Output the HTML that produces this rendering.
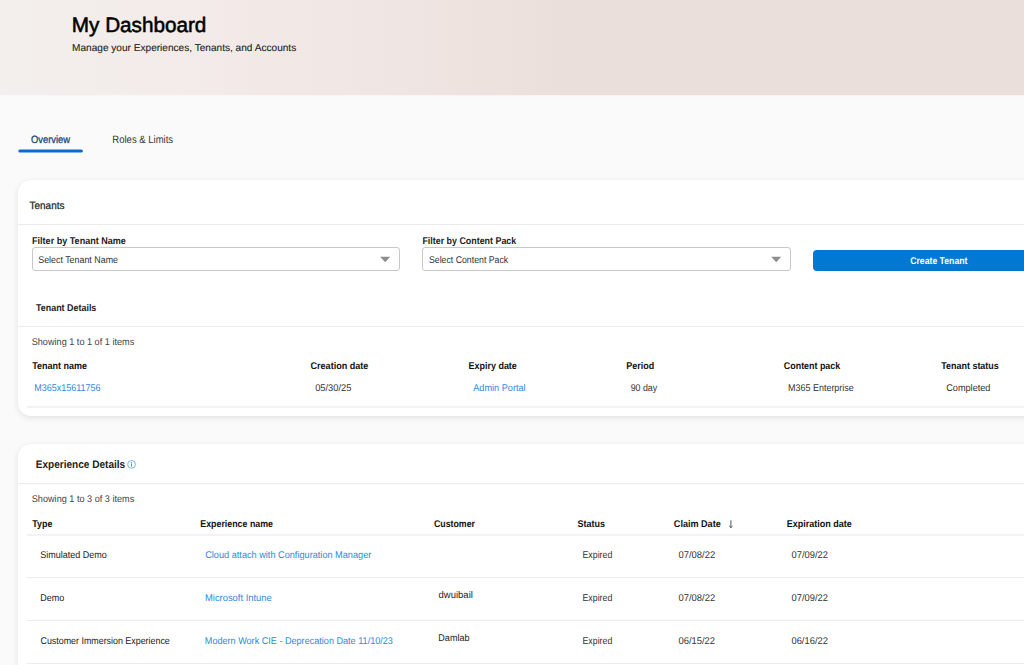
<!DOCTYPE html>
<html><head><meta charset="utf-8"><title>My Dashboard</title>
<style>
html,body{margin:0;padding:0}
body{width:1024px;height:665px;overflow:hidden;position:relative;background:#fafafa;font-family:"Liberation Sans",sans-serif}
.hdr{position:absolute;left:0;top:0;width:1024px;height:95px;background:linear-gradient(90deg,#f3efec 0%,#f3ebe9 20%,#f0e6e3 36%,#ebdfdb 56%,#ebdfdb 100%)}
.card{position:absolute;left:18px;width:1100px;background:#fff;border-radius:13px;box-shadow:0 2px 6px rgba(0,0,0,.095),0 0 2px rgba(0,0,0,.025)}
.c1{top:180px;height:236px}
.c2{top:444px;height:300px}
.dv{position:absolute;left:18px;width:1100px;height:1px;background:#eaecf0}
.ln{position:absolute;left:27px;width:1100px;height:1px;background:#ebedf1}
.ln2{position:absolute;left:27px;width:1100px;height:2px;background:#f2f3f6}
.sel{position:absolute;top:247px;height:22px;border:1px solid #c8c8c8;border-radius:3px;background:#fff;box-sizing:content-box}
.btn{position:absolute;left:813px;top:250px;width:251px;height:21px;background:#0078d4;border-radius:4px}
.t{position:absolute;left:0;top:0;text-rendering:geometricPrecision;white-space:nowrap;line-height:1;transform-origin:0 0;display:block}
svg{position:absolute;overflow:visible}
</style></head><body>
<div class="hdr"></div><div class="hdr" style="top:95px;height:1px;opacity:.22"></div>

<div class="card c1"></div>
<div class="dv" style="top:224px"></div>
<div class="sel" style="left:32px;width:366px"></div>
<div class="sel" style="left:422px;width:367px"></div>
<div class="btn"></div>
<div class="dv" style="top:326px"></div>
<div class="ln2" style="top:406px"></div>
<div class="card c2"></div>
<div class="dv" style="top:483px"></div>
<div class="ln2" style="top:534px"></div>
<div class="ln" style="top:577px"></div>
<div class="ln" style="top:620px"></div>
<div class="ln" style="top:663px"></div>
<svg style="left:0;top:0" width="1024" height="665" viewBox="0 0 1024 665">
<rect x="18.3" y="149.55" width="64.6" height="3.05" rx="1.5" fill="#0a6bd1"/>
<path d="M380.2 256.8h10l-5 5.4zM771.2 256.8h10l-5 5.4z" fill="#8e8e8e"/>
<circle cx="131.55" cy="464.4" r="3.9" fill="none" stroke="#5ea6ea" stroke-width="0.85"/>
<path d="M131.55 463.4V466.65" fill="none" stroke="#2b7de0" stroke-width="0.9"/>
<circle cx="131.55" cy="462.3" r="0.5" fill="#2b7de0"/>
<path d="M730.9 520.3V527.7M729.2 526L730.9 527.7L732.6 526" fill="none" stroke="#444" stroke-width="0.9"/>
</svg>
<span class="t" id="title" style="font-size:20.9px;font-weight:normal;color:#000;transform:translate(71.83px,16.31px) scaleX(0.9904);-webkit-text-stroke-width:0.55px;">My Dashboard</span>
<span class="t" id="sub" style="font-size:10px;font-weight:normal;color:#1f1f1f;transform:translate(72.06px,43.53px) scaleX(1.0088);-webkit-text-stroke-width:0.12px;">Manage your Experiences, Tenants, and Accounts</span>
<span class="t" id="tab1" style="font-size:10.6px;font-weight:normal;color:#1a4a7d;transform:translate(31.02px,135.03px) scaleX(0.8840);-webkit-text-stroke-width:0.3px;">Overview</span>
<span class="t" id="tab2" style="font-size:10.6px;font-weight:normal;color:#333;transform:translate(112.35px,135.03px) scaleX(0.8971);">Roles &amp; Limits</span>
<span class="t" id="tenants" style="font-size:10.6px;font-weight:normal;color:#222831;transform:translate(29.56px,201.03px) scaleX(0.9400);-webkit-text-stroke-width:0.25px;">Tenants</span>
<span class="t" id="f1" style="font-size:9.8px;font-weight:bold;color:#222;transform:translate(32.03px,236.70px) scaleX(0.9236);">Filter by Tenant Name</span>
<span class="t" id="s1" style="font-size:9.8px;font-weight:normal;color:#333;transform:translate(38.22px,255.70px) scaleX(0.9056);">Select Tenant Name</span>
<span class="t" id="f2" style="font-size:9.8px;font-weight:bold;color:#222;transform:translate(422.40px,236.70px) scaleX(0.9070);">Filter by Content Pack</span>
<span class="t" id="s2" style="font-size:9.8px;font-weight:normal;color:#333;transform:translate(428.97px,255.70px) scaleX(0.8924);">Select Content Pack</span>
<span class="t" id="btn" style="font-size:9.8px;font-weight:bold;color:#fff;transform:translate(910.21px,256.70px) scaleX(0.8852);">Create Tenant</span>
<span class="t" id="td" style="font-size:9.8px;font-weight:bold;color:#222;transform:translate(36.00px,303.70px) scaleX(0.9109);">Tenant Details</span>
<span class="t" id="sh1" style="font-size:9.8px;font-weight:normal;color:#444;transform:translate(31.69px,337.70px) scaleX(0.9318);">Showing 1 to 1 of 1 items</span>
<span class="t" id="h1" style="font-size:9.8px;font-weight:bold;color:#111;transform:translate(32.24px,361.70px) scaleX(0.9189);">Tenant name</span>
<span class="t" id="h2" style="font-size:9.8px;font-weight:bold;color:#111;transform:translate(310.49px,361.70px) scaleX(0.9246);">Creation date</span>
<span class="t" id="h3" style="font-size:9.8px;font-weight:bold;color:#111;transform:translate(468.43px,361.70px) scaleX(0.9170);">Expiry date</span>
<span class="t" id="h4" style="font-size:9.8px;font-weight:bold;color:#111;transform:translate(626.29px,361.70px) scaleX(0.9158);">Period</span>
<span class="t" id="h5" style="font-size:9.8px;font-weight:bold;color:#111;transform:translate(783.87px,361.70px) scaleX(0.9079);">Content pack</span>
<span class="t" id="h6" style="font-size:9.8px;font-weight:bold;color:#111;transform:translate(941.31px,361.70px) scaleX(0.9118);">Tenant status</span>
<span class="t" id="d1" style="font-size:9.8px;font-weight:normal;color:#2d89df;transform:translate(34.17px,383.70px) scaleX(0.9171);">M365x15611756</span>
<span class="t" id="d2" style="font-size:9.8px;font-weight:normal;color:#333;transform:translate(315.15px,383.70px) scaleX(0.9500);">05/30/25</span>
<span class="t" id="d3" style="font-size:9.8px;font-weight:normal;color:#2d89df;transform:translate(473.26px,383.70px) scaleX(0.9329);">Admin Portal</span>
<span class="t" id="d4" style="font-size:9.8px;font-weight:normal;color:#333;transform:translate(630.63px,383.70px) scaleX(0.9040);">90 day</span>
<span class="t" id="d5" style="font-size:9.8px;font-weight:normal;color:#333;transform:translate(788.06px,383.70px) scaleX(0.9142);">M365 Enterprise</span>
<span class="t" id="d6" style="font-size:9.8px;font-weight:normal;color:#333;transform:translate(946.18px,383.70px) scaleX(0.9342);">Completed</span>
<span class="t" id="ed" style="font-size:11px;font-weight:bold;color:#222;transform:translate(35.83px,459.69px) scaleX(0.9129);">Experience Details</span>
<span class="t" id="sh2" style="font-size:9.8px;font-weight:normal;color:#444;transform:translate(31.79px,494.70px) scaleX(0.9311);">Showing 1 to 3 of 3 items</span>
<span class="t" id="eh1" style="font-size:9.8px;font-weight:bold;color:#111;transform:translate(32.19px,519.70px) scaleX(0.9105);">Type</span>
<span class="t" id="eh2" style="font-size:9.8px;font-weight:bold;color:#111;transform:translate(200.28px,519.70px) scaleX(0.9020);">Experience name</span>
<span class="t" id="eh3" style="font-size:9.8px;font-weight:bold;color:#111;transform:translate(433.94px,519.70px) scaleX(0.8979);">Customer</span>
<span class="t" id="eh4" style="font-size:9.8px;font-weight:bold;color:#111;transform:translate(577.53px,519.70px) scaleX(0.9152);">Status</span>
<span class="t" id="eh5" style="font-size:9.8px;font-weight:bold;color:#111;transform:translate(673.84px,519.70px) scaleX(0.9258);">Claim Date</span>
<span class="t" id="eh6" style="font-size:9.8px;font-weight:bold;color:#111;transform:translate(786.69px,519.70px) scaleX(0.9190);">Expiration date</span>
<span class="t" id="r0t" style="font-size:9.8px;font-weight:normal;color:#222;transform:translate(40.15px,550.70px) scaleX(0.9200);">Simulated Demo</span>
<span class="t" id="r0n" style="font-size:9.8px;font-weight:normal;color:#2d89df;transform:translate(205.21px,550.70px) scaleX(0.9355);">Cloud attach with Configuration Manager</span>
<span class="t" id="r0s" style="font-size:9.8px;font-weight:normal;color:#333;transform:translate(582.48px,550.70px) scaleX(0.8972);">Expired</span>
<span class="t" id="r0cd" style="font-size:9.8px;font-weight:normal;color:#333;transform:translate(678.48px,550.70px) scaleX(0.9624);">07/08/22</span>
<span class="t" id="r0ed" style="font-size:9.8px;font-weight:normal;color:#333;transform:translate(791.49px,550.70px) scaleX(0.9549);">07/09/22</span>
<span class="t" id="r1t" style="font-size:9.8px;font-weight:normal;color:#222;transform:translate(40.25px,593.70px) scaleX(0.9208);">Demo</span>
<span class="t" id="r1n" style="font-size:9.8px;font-weight:normal;color:#2d89df;transform:translate(205.00px,593.70px) scaleX(0.9571);">Microsoft Intune</span>
<span class="t" id="r1c" style="font-size:9.8px;font-weight:normal;color:#222;transform:translate(438.56px,590.70px) scaleX(0.9687);">dwuibail</span>
<span class="t" id="r1s" style="font-size:9.8px;font-weight:normal;color:#333;transform:translate(582.48px,593.70px) scaleX(0.8972);">Expired</span>
<span class="t" id="r1cd" style="font-size:9.8px;font-weight:normal;color:#333;transform:translate(678.48px,593.70px) scaleX(0.9624);">07/08/22</span>
<span class="t" id="r1ed" style="font-size:9.8px;font-weight:normal;color:#333;transform:translate(791.49px,593.70px) scaleX(0.9549);">07/09/22</span>
<span class="t" id="r2t" style="font-size:9.8px;font-weight:normal;color:#222;transform:translate(40.46px,636.70px) scaleX(0.9068);">Customer Immersion Experience</span>
<span class="t" id="r2n" style="font-size:9.8px;font-weight:normal;color:#2d89df;transform:translate(204.81px,636.70px) scaleX(0.9277);">Modern Work CIE - Deprecation Date 11/10/23</span>
<span class="t" id="r2c" style="font-size:9.8px;font-weight:normal;color:#222;transform:translate(438.32px,633.70px) scaleX(0.9247);">Damlab</span>
<span class="t" id="r2s" style="font-size:9.8px;font-weight:normal;color:#333;transform:translate(582.48px,636.70px) scaleX(0.8972);">Expired</span>
<span class="t" id="r2cd" style="font-size:9.8px;font-weight:normal;color:#333;transform:translate(678.46px,636.70px) scaleX(0.9569);">06/15/22</span>
<span class="t" id="r2ed" style="font-size:9.8px;font-weight:normal;color:#333;transform:translate(791.46px,636.70px) scaleX(0.9555);">06/16/22</span>
</body></html>
